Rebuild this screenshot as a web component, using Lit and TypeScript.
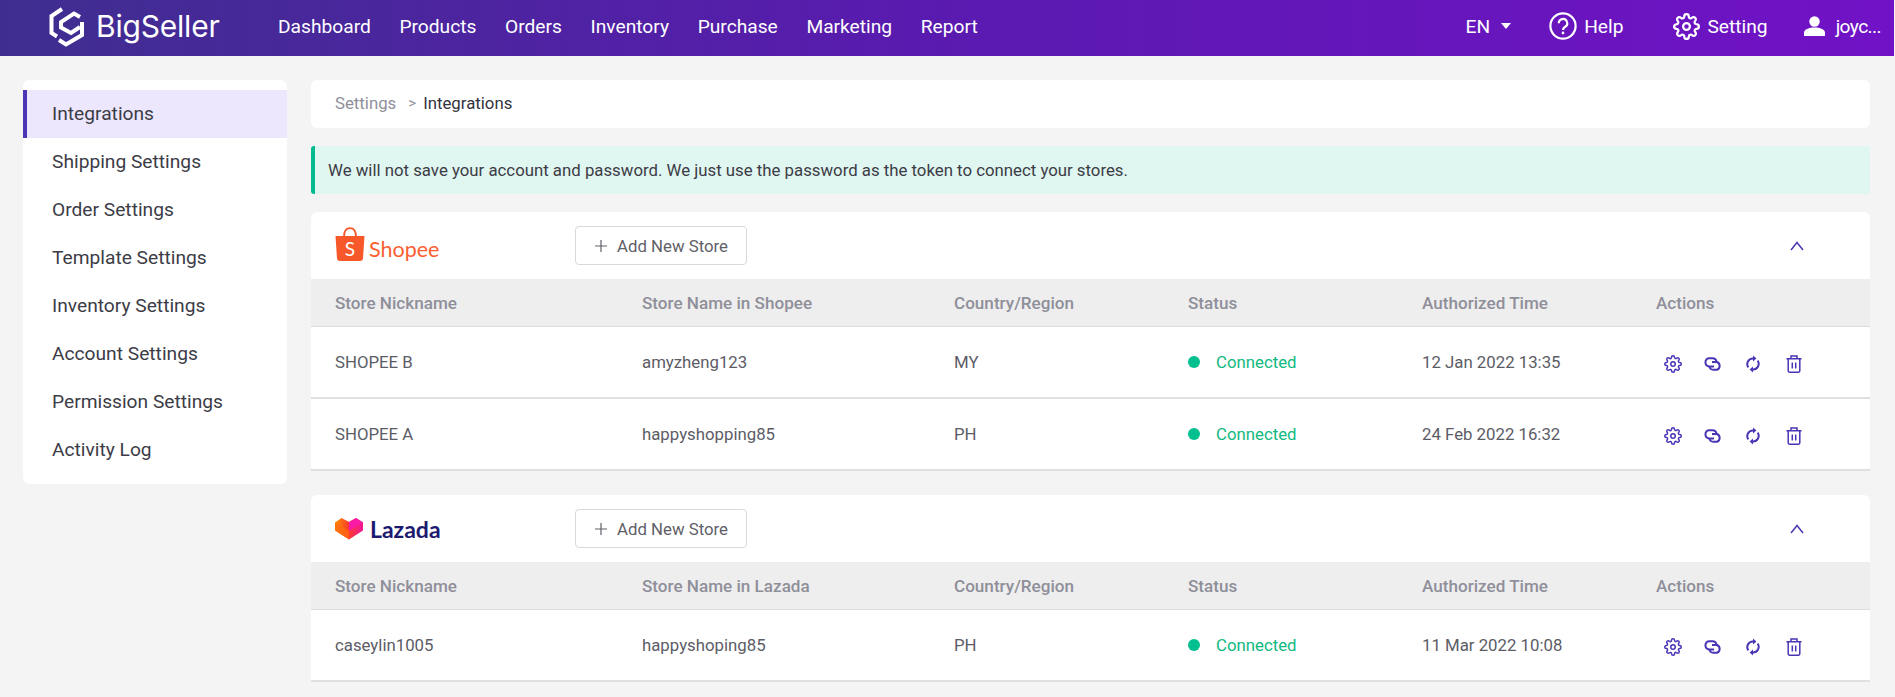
import { LitElement, html, css, svg } from "lit";
import { customElement } from "lit/decorators.js";

const gearPath = svg`<circle cx="12" cy="12" r="3"/><path d="M19.4 15a1.65 1.65 0 0 0 .33 1.82l.06.06a2 2 0 0 1 0 2.83 2 2 0 0 1-2.83 0l-.06-.06a1.65 1.65 0 0 0-1.82-.33 1.65 1.65 0 0 0-1 1.51V21a2 2 0 0 1-2 2 2 2 0 0 1-2-2v-.09A1.65 1.65 0 0 0 9 19.4a1.65 1.65 0 0 0-1.82.33l-.06.06a2 2 0 0 1-2.83 0 2 2 0 0 1 0-2.83l.06-.06a1.65 1.65 0 0 0 .33-1.82 1.65 1.65 0 0 0-1.51-1H3a2 2 0 0 1-2-2 2 2 0 0 1 2-2h.09A1.65 1.65 0 0 0 4.6 9a1.65 1.65 0 0 0-.33-1.82l-.06-.06a2 2 0 0 1 0-2.83 2 2 0 0 1 2.83 0l.06.06a1.65 1.65 0 0 0 1.82.33H9a1.65 1.65 0 0 0 1-1.51V3a2 2 0 0 1 2-2 2 2 0 0 1 2 2v.09a1.65 1.65 0 0 0 1 1.51 1.65 1.65 0 0 0 1.82-.33l.06-.06a2 2 0 0 1 2.83 0 2 2 0 0 1 0 2.83l-.06.06a1.65 1.65 0 0 0-.33 1.82V9a1.65 1.65 0 0 0 1.51 1H21a2 2 0 0 1 2 2 2 2 0 0 1-2 2h-.09a1.65 1.65 0 0 0-1.51 1z"/>`;

const actions = html`
  <div class="actions">
    <svg class="a-gear" width="18" height="18" viewBox="0 0 24 24" fill="none" stroke="currentColor" stroke-width="2">${gearPath}</svg>
    <svg class="a-link" width="20" height="14" viewBox="0 0 20 14" fill="none" stroke="currentColor" stroke-width="2">
      <path d="M11 9.5H6A4.2 4.2 0 0 1 6 1.2H9.5A4.3 4.3 0 0 1 13.6 5"/>
      <path d="M9 5H14A4.2 4.2 0 0 1 14 12.8H10.5A4.3 4.3 0 0 1 6.4 9"/>
    </svg>
    <svg class="a-sync" width="14" height="18" viewBox="0 0 14 18" fill="none" stroke="currentColor" stroke-width="2">
      <path d="M2.4 12.4A5.6 5.6 0 0 1 7 3.5"/>
      <path d="M11.6 5.6A5.6 5.6 0 0 1 7 14.5"/>
      <path d="M7 .6V6.4L10.4 3.5Z" fill="currentColor" stroke="none"/>
      <path d="M7 11.6V17.4L3.6 14.5Z" fill="currentColor" stroke="none"/>
    </svg>
    <svg class="a-trash" width="16" height="18" viewBox="0 0 16 18" fill="none" stroke="currentColor" stroke-width="1.5">
      <path d="M.5 3.7H15.5M5 3.7V1H11V3.7"/>
      <path d="M2.2 3.7V15.8A1.4 1.4 0 0 0 3.6 17.2H12.4A1.4 1.4 0 0 0 13.8 15.8V3.7"/>
      <path d="M6.3 7.6V13.4M9.7 7.6V13.4"/>
    </svg>
  </div>`;

const shopeeLogo = html`
  <div class="logo shopee">
    <svg width="30" height="35" viewBox="0 0 30 35">
      <path d="M9 10C9 4 11.5 1.2 15 1.2S21 4 21 10" fill="none" stroke="#f6582a" stroke-width="1.8"/>
      <path d="M.5 9H29.5L28 31.5A3 3 0 0 1 25 34H5A3 3 0 0 1 2 31.5Z" fill="#f6582a"/>
      <text x="15" y="28.5" text-anchor="middle" font-family="Lato, sans-serif" font-size="19" fill="#fff">S</text>
    </svg>
    <span>Shopee</span>
  </div>`;

const lazadaLogo = html`
  <div class="logo lazada">
    <svg width="28" height="23" viewBox="0 0 28 23">
      <defs>
        <linearGradient id="lz" x1="0" x2="1" y1="0" y2="0">
          <stop offset="0" stop-color="#ff9200"/>
          <stop offset=".5" stop-color="#f93a2c"/>
          <stop offset="1" stop-color="#f2169c"/>
        </linearGradient>
      </defs>
      <path d="M0 5.5 6.5 1 14 5 21 1 28 5.5V13.5L14 22.5 0 13.5Z" fill="url(#lz)"/>
      <path d="M14 5 21 1 28 5.5 14 14Z" fill="#fb1aa6"/>
      <path d="M14 14V22.5L0 13.5V5.5Z" fill="#ff6a10" opacity=".75"/>
    </svg>
    <span>Lazada</span>
  </div>`;

@customElement("store-card")
class StoreCard extends LitElement {
  static properties = { platform: {}, rows: { type: Array } };
  declare platform: string;
  declare rows: string[][];
  static styles = css`
    :host { display: block; background: #fff; border-radius: 6px 6px 0 0; }
    .top { height: 67px; display: flex; align-items: center; padding: 0 66px 0 24px; }
    .logo { width: 240px; display: flex; align-items: center; }
    .logo span { font-family: Lato, sans-serif; }
    .shopee svg { margin-top: -2px; }
    .shopee span { color: #fb5e30; font-size: 21.5px; margin: 7px 0 0 4px; }
    .lazada { height: 30px; }
    .lazada span { color: #1c1a70; font-size: 23px; font-weight: 700; margin-left: 7px; }
    .btn { width: 172px; height: 39px; box-sizing: border-box; border: 1px solid #d9d9d9; border-radius: 4px; display: flex; align-items: center; justify-content: center; gap: 10px; padding-left: 1px; font-size: 16.8px; color: #5f5f69; background: #fff; }
    .chev { margin-left: auto; color: #4b38b3; display: block; }
    .cols { display: grid; grid-template-columns: 307px 312px 234px 234px 234px 1fr; align-items: center; }
    .cols > * { padding-left: 24px; min-width: 0; }
    .head { height: 48px; box-sizing: border-box; background: #eee; border-bottom: 1px solid #dcdcdc; font-size: 17.1px; font-weight: 500; color: #8f8f9a; }
    .row { height: 72px; box-sizing: border-box; border-bottom: 2px solid #e0e0e0; font-size: 16.8px; color: #5c5c66; }
    .status { display: flex; align-items: center; gap: 16px; color: #10b981; }
    .dot { width: 12px; height: 12px; border-radius: 50%; background: #00c08f; }
    .actions { display: flex; align-items: center; color: #4a35b5; padding: 3px 0 0 32px !important; }
    .actions svg { display: block; flex: none; }
    .a-gear { margin-right: 21px; }
    .a-link { margin-right: 23px; }
    .a-sync { margin-right: 26px; }
  `;
  render() {
    return html`
      <div class="top">
        ${this.platform === "Shopee" ? shopeeLogo : lazadaLogo}
        <div class="btn">
          <svg width="12" height="12" viewBox="0 0 12 12" stroke="#5f5f69" stroke-width="1.2"><path d="M6 0V12M0 6H12"/></svg>
          <span>Add New Store</span>
        </div>
        <svg class="chev" width="14" height="10" viewBox="0 0 14 10" fill="none" stroke="currentColor" stroke-width="1.5"><path d="M1 9 7 1.5 13 9"/></svg>
      </div>
      <div class="cols head">
        <div>Store Nickname</div><div>Store Name in ${this.platform}</div><div>Country/Region</div><div>Status</div><div>Authorized Time</div><div>Actions</div>
      </div>
      ${this.rows.map(r => html`
        <div class="cols row">
          <div>${r[0]}</div><div>${r[1]}</div><div>${r[2]}</div>
          <div class="status"><i class="dot"></i><span>Connected</span></div>
          <div>${r[3]}</div>
          ${actions}
        </div>`)}
    `;
  }
}

@customElement("app-root")
class AppRoot extends LitElement {
  static styles = css`
    :host { display: block; min-height: 697px; background: #f4f4f4; font-family: Roboto, sans-serif; overflow: hidden; }
    header { height: 56px; box-sizing: border-box; padding: 0 0 4px 49px; margin-right: 1px; background: linear-gradient(90deg, #3f2e90 0%, #5a1ab0 50%, #7112c6 100%); color: #fff; display: flex; align-items: center; font-size: 19.2px; }
    .brand { display: flex; align-items: center; width: 229px; flex: none; }
    .brand span { font-family: Inter, sans-serif; font-weight: 400; font-size: 30px; letter-spacing: -.2px; margin-left: 12px; line-height: 1; }
    nav { display: flex; gap: 28.6px; }
    .right { margin-left: auto; display: flex; align-items: center; }
    .right > div { display: flex; align-items: center; }
    .lang { gap: 11px; margin-right: 38px; }
    .help { gap: 7px; margin-right: 50px; }
    .set { gap: 7px; margin-right: 36px; }
    .user { gap: 11px; margin-right: 13px; }
    .user span { letter-spacing: -.6px; }
    .layout { display: flex; align-items: flex-start; gap: 24px; padding: 24px 25px 15px 23px; }
    aside { width: 264px; flex: none; background: #fff; border-radius: 6px; padding: 10px 0; box-sizing: border-box; }
    .item { height: 48px; box-sizing: border-box; padding: 0 0 2px 29px; display: flex; align-items: center; font-size: 19.2px; color: #3c3c46; }
    .item.on { background: #ece7fd; border-left: 4px solid #4b35b5; padding-left: 25px; }
    main { flex: 1; min-width: 0; display: flex; flex-direction: column; }
    .crumb { height: 48px; box-sizing: border-box; background: #fff; border-radius: 6px; display: flex; align-items: center; padding: 0 0 2px 24px; font-size: 16.8px; color: #8f8f9a; }
    .crumb .sep { margin: 0 7px 0 12px; font-size: 15px; }
    .crumb b { font-weight: 400; color: #33333d; }
    .alert { height: 48px; margin: 18px 0; box-sizing: border-box; background: #e0f6f0; border-left: 4px solid #00bb8e; border-radius: 3px 0 0 3px; display: flex; align-items: center; padding-left: 13px; font-size: 16.8px; color: #3c3c46; }
    store-card + store-card { margin-top: 24px; }
  `;
  render() {
    const items = ["Shipping Settings", "Order Settings", "Template Settings", "Inventory Settings", "Account Settings", "Permission Settings", "Activity Log"];
    return html`
      <header>
        <div class="brand">
          <svg width="35" height="41" viewBox="0 0 35 41" fill="none" stroke="#fff" stroke-width="4">
            <path d="M13 3 2.5 10V27L8 30.5"/>
            <path d="M31 11 25 7.5 12 16V21.5L22 27 31 21"/>
            <path d="M33 16V29L17 38.5 10 34"/>
          </svg>
          <span>BigSeller</span>
        </div>
        <nav>
          <span>Dashboard</span><span>Products</span><span>Orders</span><span>Inventory</span><span>Purchase</span><span>Marketing</span><span>Report</span>
        </nav>
        <div class="right">
          <div class="lang"><span>EN</span>
            <svg width="10" height="6" viewBox="0 0 10 6" fill="#fff"><path d="M0 0H10L5 6Z"/></svg>
          </div>
          <div class="help">
            <svg width="28" height="28" viewBox="0 0 28 28" fill="none" stroke="#fff" stroke-width="2.2">
              <circle cx="14" cy="14" r="12.6"/>
              <path d="M9.8 11.2A4.2 4.2 0 1 1 15.8 15C14.5 15.8 14 16.4 14 18"/>
              <circle cx="14" cy="21" r=".6" fill="#fff" stroke-width="1.6"/>
            </svg>
            <span>Help</span>
          </div>
          <div class="set">
            <svg width="27" height="27" viewBox="0 0 24 24" fill="none" stroke="#fff" stroke-width="2">${gearPath}</svg>
            <span>Setting</span>
          </div>
          <div class="user">
            <svg width="21" height="20" viewBox="0 0 21 20" fill="#fff">
              <circle cx="10.5" cy="5.5" r="5.2"/>
              <path d="M0 20V16.5C0 13.5 5 11.5 10.5 11.5S21 13.5 21 16.5V20Z"/>
            </svg>
            <span>joyc...</span>
          </div>
        </div>
      </header>
      <div class="layout">
        <aside>
          <div class="item on">Integrations</div>
          ${items.map(t => html`<div class="item">${t}</div>`)}
        </aside>
        <main>
          <div class="crumb"><span>Settings</span><span class="sep">&gt;</span><b>Integrations</b></div>
          <div class="alert">We will not save your account and password. We just use the password as the token to connect your stores.</div>
          <store-card platform="Shopee" .rows=${[["SHOPEE B", "amyzheng123", "MY", "12 Jan 2022 13:35"], ["SHOPEE A", "happyshopping85", "PH", "24 Feb 2022 16:32"]]}></store-card>
          <store-card platform="Lazada" .rows=${[["caseylin1005", "happyshoping85", "PH", "11 Mar 2022 10:08"]]}></store-card>
        </main>
      </div>
    `;
  }
}
